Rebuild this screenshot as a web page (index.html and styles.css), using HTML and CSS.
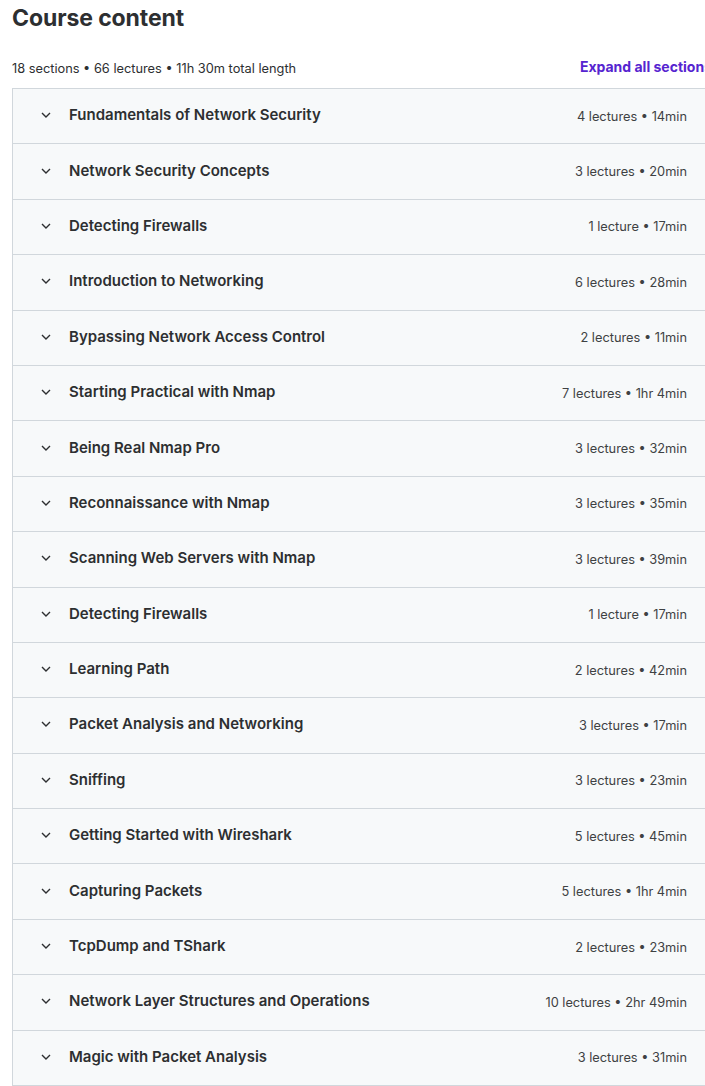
FILE: index.html
```html
<!DOCTYPE html>
<html>
<head>
<meta charset="utf-8">
<link rel="stylesheet" href="styles.css">
</head>
<body>
<div class="page">
  <h2 class="title">Course content</h2>
  <div class="summary">
    <span class="stats">18 sections • 66 lectures • 11h 30m total length</span>
    <span class="expand">Expand all sections</span>
  </div>
  <div class="list">
    <div class="row"><span class="chev"><svg width="10" height="6" viewBox="0 0 10 6"><path d="M1 1l4 4 4-4" fill="none" stroke="#2d2f31" stroke-width="1.4"/></svg></span><span class="name">Fundamentals of Network Security</span><span class="meta">4 lectures • 14min</span></div>
    <div class="row"><span class="chev"><svg width="10" height="6" viewBox="0 0 10 6"><path d="M1 1l4 4 4-4" fill="none" stroke="#2d2f31" stroke-width="1.4"/></svg></span><span class="name">Network Security Concepts</span><span class="meta">3 lectures • 20min</span></div>
    <div class="row"><span class="chev"><svg width="10" height="6" viewBox="0 0 10 6"><path d="M1 1l4 4 4-4" fill="none" stroke="#2d2f31" stroke-width="1.4"/></svg></span><span class="name">Detecting Firewalls</span><span class="meta">1 lecture • 17min</span></div>
    <div class="row"><span class="chev"><svg width="10" height="6" viewBox="0 0 10 6"><path d="M1 1l4 4 4-4" fill="none" stroke="#2d2f31" stroke-width="1.4"/></svg></span><span class="name">Introduction to Networking</span><span class="meta">6 lectures • 28min</span></div>
    <div class="row"><span class="chev"><svg width="10" height="6" viewBox="0 0 10 6"><path d="M1 1l4 4 4-4" fill="none" stroke="#2d2f31" stroke-width="1.4"/></svg></span><span class="name">Bypassing Network Access Control</span><span class="meta">2 lectures • 11min</span></div>
    <div class="row"><span class="chev"><svg width="10" height="6" viewBox="0 0 10 6"><path d="M1 1l4 4 4-4" fill="none" stroke="#2d2f31" stroke-width="1.4"/></svg></span><span class="name">Starting Practical with Nmap</span><span class="meta">7 lectures • 1hr 4min</span></div>
    <div class="row"><span class="chev"><svg width="10" height="6" viewBox="0 0 10 6"><path d="M1 1l4 4 4-4" fill="none" stroke="#2d2f31" stroke-width="1.4"/></svg></span><span class="name">Being Real Nmap Pro</span><span class="meta">3 lectures • 32min</span></div>
    <div class="row"><span class="chev"><svg width="10" height="6" viewBox="0 0 10 6"><path d="M1 1l4 4 4-4" fill="none" stroke="#2d2f31" stroke-width="1.4"/></svg></span><span class="name">Reconnaissance with Nmap</span><span class="meta">3 lectures • 35min</span></div>
    <div class="row"><span class="chev"><svg width="10" height="6" viewBox="0 0 10 6"><path d="M1 1l4 4 4-4" fill="none" stroke="#2d2f31" stroke-width="1.4"/></svg></span><span class="name">Scanning Web Servers with Nmap</span><span class="meta">3 lectures • 39min</span></div>
    <div class="row"><span class="chev"><svg width="10" height="6" viewBox="0 0 10 6"><path d="M1 1l4 4 4-4" fill="none" stroke="#2d2f31" stroke-width="1.4"/></svg></span><span class="name">Detecting Firewalls</span><span class="meta">1 lecture • 17min</span></div>
    <div class="row"><span class="chev"><svg width="10" height="6" viewBox="0 0 10 6"><path d="M1 1l4 4 4-4" fill="none" stroke="#2d2f31" stroke-width="1.4"/></svg></span><span class="name">Learning Path</span><span class="meta">2 lectures • 42min</span></div>
    <div class="row"><span class="chev"><svg width="10" height="6" viewBox="0 0 10 6"><path d="M1 1l4 4 4-4" fill="none" stroke="#2d2f31" stroke-width="1.4"/></svg></span><span class="name">Packet Analysis and Networking</span><span class="meta">3 lectures • 17min</span></div>
    <div class="row"><span class="chev"><svg width="10" height="6" viewBox="0 0 10 6"><path d="M1 1l4 4 4-4" fill="none" stroke="#2d2f31" stroke-width="1.4"/></svg></span><span class="name">Sniffing</span><span class="meta">3 lectures • 23min</span></div>
    <div class="row"><span class="chev"><svg width="10" height="6" viewBox="0 0 10 6"><path d="M1 1l4 4 4-4" fill="none" stroke="#2d2f31" stroke-width="1.4"/></svg></span><span class="name">Getting Started with Wireshark</span><span class="meta">5 lectures • 45min</span></div>
    <div class="row"><span class="chev"><svg width="10" height="6" viewBox="0 0 10 6"><path d="M1 1l4 4 4-4" fill="none" stroke="#2d2f31" stroke-width="1.4"/></svg></span><span class="name">Capturing Packets</span><span class="meta">5 lectures • 1hr 4min</span></div>
    <div class="row"><span class="chev"><svg width="10" height="6" viewBox="0 0 10 6"><path d="M1 1l4 4 4-4" fill="none" stroke="#2d2f31" stroke-width="1.4"/></svg></span><span class="name">TcpDump and TShark</span><span class="meta">2 lectures • 23min</span></div>
    <div class="row"><span class="chev"><svg width="10" height="6" viewBox="0 0 10 6"><path d="M1 1l4 4 4-4" fill="none" stroke="#2d2f31" stroke-width="1.4"/></svg></span><span class="name">Network Layer Structures and Operations</span><span class="meta">10 lectures • 2hr 49min</span></div>
    <div class="row"><span class="chev"><svg width="10" height="6" viewBox="0 0 10 6"><path d="M1 1l4 4 4-4" fill="none" stroke="#2d2f31" stroke-width="1.4"/></svg></span><span class="name">Magic with Packet Analysis</span><span class="meta">3 lectures • 31min</span></div>
  </div>
</div>
</body>
</html>
```

FILE: styles.css
```css
html, body {
  margin: 0;
  padding: 0;
  background: #ffffff;
  overflow: hidden;
}
body {
  font-family: Inter, "Noto Sans", sans-serif;
  color: #2d2f31;
}
.page {
  width: 700px;
  padding: 0 0 0 12px;
}
.title {
  margin: 0;
  padding-top: 4px;
  font-size: 23px;
  line-height: 28px;
  font-weight: 700;
  letter-spacing: -0.1px;
  color: #2d2f31;
}
.summary {
  display: flex;
  justify-content: space-between;
  align-items: center;
  margin-top: 24px;
  height: 24px;
  padding-bottom: 8px;
  white-space: nowrap;
}
.stats {
  font-size: 12.8px;
  color: #2d2f31;
}
.expand {
  font-size: 14px;
  font-weight: 700;
  color: #5624d0;
  margin-top: -4px;
}
.list {
  border: 1px solid #d1d7dc;
  border-right: none;
  border-bottom: none;
}
.row {
  display: flex;
  align-items: center;
  height: 54.4px;
  background: #f7f9fa;
  border-bottom: 1px solid #d1d7dc;
  padding: 0 25px 0 28px;
  white-space: nowrap;
}
.chev {
  display: flex;
  width: 10px;
  margin-right: 18px;
  margin-top: -2px;
}
.name {
  flex: 1;
  font-size: 15px;
  font-weight: 600;
  color: #2d2f31;
  margin-top: -3px;
}
.meta {
  font-size: 12.8px;
  color: #3e4143;
}
```
